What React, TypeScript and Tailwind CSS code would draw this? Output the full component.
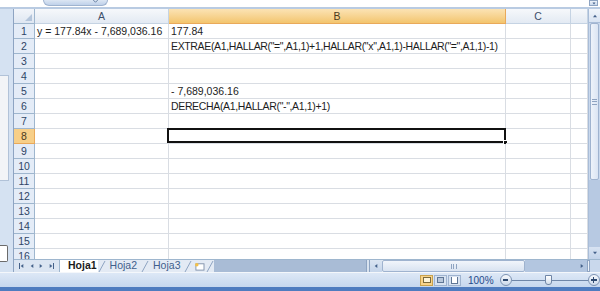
import React from 'react';

const FONT = { fontFamily: '"Liberation Sans", Arial, sans-serif' };

const cols = [
    { key: 'A', w: 'w-[134px]' },
    { key: 'B', w: 'w-[337px]' },
    { key: 'C', w: 'w-[65px]' },
    { key: 'D', w: 'w-[17px]' },
];

const cells: Record<string, { text: string; formula?: boolean }> = {
    'A1': { text: 'y = 177.84x - 7,689,036.16' },
    'B1': { text: '177.84' },
    'B2': { text: 'EXTRAE(A1,HALLAR("=",A1,1)+1,HALLAR("x",A1,1)-HALLAR("=",A1,1)-1)', formula: true },
    'B5': { text: '- 7,689,036.16' },
    'B6': { text: 'DERECHA(A1,HALLAR("-",A1,1)+1)', formula: true },
};

const rows = Array.from({ length: 16 }, (_, i) => i + 1);

function Arrow({ dir, className = '' }: { dir: 'up' | 'down' | 'left' | 'right'; className?: string }) {
    const pts = {
        up: '1,5 4,1 7,5',
        down: '1,1 4,5 7,1',
        left: '5,1 1,4 5,7',
        right: '1,1 5,4 1,7',
    }[dir];
    const vb = dir === 'up' || dir === 'down' ? '0 0 8 6' : '0 0 6 8';
    return (
        <svg viewBox={vb} className={className}>
            <polygon points={pts} fill="#44618a" />
        </svg>
    );
}

function Slash() {
    return (
        <svg viewBox="0 0 8 13" className="w-[8px] h-[13px] shrink-0">
            <line x1="1" y1="12" x2="7" y2="1" stroke="#8ea4c2" strokeWidth="1" />
        </svg>
    );
}

function Grid() {
    return (
        <div className="flex-1 flex flex-col overflow-hidden bg-white">
            {/* column headers */}
            <div className="flex h-[15px] shrink-0">
                <div className="w-[21px] shrink-0 bg-gradient-to-b from-[#f2f5fa] to-[#dfe7f2] border-r border-b border-[#9eb6ce] relative">
                    <svg viewBox="0 0 8 8" className="absolute right-[2px] bottom-[2px] w-[7px] h-[7px]">
                        <polygon points="8,0 8,8 0,8" fill="#b4c5db" />
                    </svg>
                </div>
                {cols.map(c => (
                    <div
                        key={c.key}
                        className={`${c.w} shrink-0 flex items-center justify-center pt-[1px] text-[10.5px] border-r border-b ${c.key === 'B' ? 'bg-gradient-to-b from-[#fbe3b4] to-[#f3c56d] border-[#e9a95a] text-[#4a3a1c]' : 'bg-gradient-to-b from-[#f6f8fb] to-[#e3eaf3] border-[#c5d3e3] text-[#3c4f6a]'}`}
                    >
                        {c.key === 'D' ? '' : c.key}
                    </div>
                ))}
            </div>
            {rows.map(r => (
                <div key={r} className="flex h-[15px] shrink-0">
                    <div className={`w-[21px] shrink-0 flex items-center justify-center pt-[2px] text-[10.5px] border-r border-b ${r === 8 ? 'bg-[#f7cf88] border-[#e9a95a] text-[#4a3a1c]' : 'bg-[#e4ecf7] border-[#9eb6ce] text-[#2e4566]'}`}>
                        {r}
                    </div>
                    {cols.map(c => {
                        const cell = cells[`${c.key}${r}`];
                        const selected = c.key === 'B' && r === 8;
                        return (
                            <div key={c.key} className={`${c.w} shrink-0 relative border-r border-b border-[#d9dde3] flex items-center pt-[2px] pl-[2px] whitespace-nowrap`}>
                                {cell && (
                                    <span className={`text-[#1d1d1d] ${cell.formula ? 'text-[10.5px] tracking-[-0.35px]' : 'text-[10.5px]'}`}>{cell.text}</span>
                                )}
                                {selected && (
                                    <div className="absolute -left-[2px] -top-[1px] w-[calc(100%+3px)] h-[calc(100%+1px)] border-2 border-[#111]">
                                        <div className="absolute -right-[4px] -bottom-[4px] w-[5px] h-[5px] bg-[#111] border border-white" />
                                    </div>
                                )}
                            </div>
                        );
                    })}
                </div>
            ))}
        </div>
    );
}

function VScroll() {
    return (
        <div className="w-[12px] shrink-0 flex flex-col bg-[#c9d8ec] border-l border-[#a9bdd8]">
            <div className="h-[14px] shrink-0 flex items-center justify-center bg-gradient-to-b from-[#f1f5fb] to-[#d8e3f2] border-b border-[#a9bdd8]">
                <Arrow dir="up" className="w-[6px] h-[4px]" />
            </div>
            <div className="h-[157px] shrink-0 mx-[1px] bg-gradient-to-r from-[#eef3fa] to-[#dbe5f3] border border-[#9fb3cf] rounded-[2px] flex items-center justify-center">
                <div className="w-[5px] h-[6px] border-y border-[#8ea3c1] flex flex-col justify-center">
                    <div className="h-px bg-[#8ea3c1]" />
                </div>
            </div>
            <div className="flex-1 bg-[#b7c9e2]" />
            <div className="h-[12px] shrink-0 flex items-center justify-center bg-gradient-to-b from-[#d8e3f2] to-[#c2d3ea]">
                <Arrow dir="down" className="w-[6px] h-[4px]" />
            </div>
        </div>
    );
}

function TabBar() {
    return (
        <div className="h-[13px] shrink-0 flex bg-[#e8eef6] border-t border-[#9eb6ce] text-[10.5px]">
            <div className="w-[46px] shrink-0 flex items-center justify-around px-[2px] bg-[#dbe5f2] border-r border-[#9eb6ce]">
                <div className="flex items-center"><div className="w-px h-[6px] bg-[#44618a]" /><Arrow dir="left" className="w-[4px] h-[6px]" /></div>
                <Arrow dir="left" className="w-[4px] h-[6px]" />
                <Arrow dir="right" className="w-[4px] h-[6px]" />
                <div className="flex items-center"><Arrow dir="right" className="w-[4px] h-[6px]" /><div className="w-px h-[6px] bg-[#44618a]" /></div>
            </div>
            <div className="flex items-center pl-[7px] bg-white">
                <span className="font-bold text-[#1b1b1b] px-[1px]">Hoja1</span>
            </div>
            <div className="flex items-center bg-[#e3eaf4]">
                <Slash />
                <span className="text-[#3f5f8c] px-[4px]">Hoja2</span>
                <Slash />
                <span className="text-[#3f5f8c] px-[4px]">Hoja3</span>
                <Slash />
                <div className="w-[14px] flex items-center justify-center">
                    <svg viewBox="0 0 12 10" className="w-[11px] h-[9px]">
                        <rect x="2" y="2" width="9" height="7" fill="#fff" stroke="#7d8fa8" strokeWidth="1" />
                        <circle cx="3" cy="3" r="2" fill="#f3c14a" />
                    </svg>
                </div>
                <Slash />
            </div>
            <div className="w-[152px] shrink-0 bg-[#a9bcd6]" />
            <div className="w-[4px] shrink-0 bg-[#d8e2ef] border-x border-[#8ea4c2]" />
            <div className="w-[12px] shrink-0 flex items-center justify-center bg-gradient-to-b from-[#dbe5f2] to-[#c5d5ea]">
                <Arrow dir="left" className="w-[4px] h-[6px]" />
            </div>
            <div className="w-[143px] shrink-0 bg-gradient-to-b from-[#f1f5fb] to-[#d9e3f1] border border-[#9fb3cf] rounded-[2px] flex items-center justify-center">
                <div className="w-[6px] h-[5px] border-x border-[#8ea3c1] flex justify-center"><div className="w-px bg-[#8ea3c1]" /></div>
            </div>
            <div className="flex-1 bg-[#b3c6e0]" />
            <div className="w-[10px] shrink-0 flex items-center justify-center bg-[#b3c6e0]">
                <Arrow dir="right" className="w-[4px] h-[6px]" />
            </div>
            <div className="w-[3px] shrink-0 bg-[#eef3fa] border border-[#8ea4c2]" />
            <div className="w-[10px] shrink-0 bg-[#c9d8ec]" />
        </div>
    );
}

function StatusBar() {
    return (
        <div className="h-[15px] shrink-0 flex items-center bg-gradient-to-b from-[#dde8f6] to-[#c6d7ee] border-t border-[#f4f7fb]">
            <div className="w-[420px] shrink-0" />
            <div className="flex items-center gap-[1px]">
                <div className="w-[13px] h-[11px] bg-[#f8d38a] border border-[#c9a24d] flex items-center justify-center">
                    <div className="w-[8px] h-[6px] border border-[#7b6a3c] bg-[#fff5d8]" />
                </div>
                <div className="w-[13px] h-[11px] border border-[#9fb3cf] bg-[#d8e3f1] flex items-center justify-center">
                    <div className="w-[7px] h-[6px] border border-[#5f7696] bg-[#b8c7db]" />
                </div>
                <div className="w-[13px] h-[11px] border border-[#9fb3cf] bg-[#d8e3f1] flex items-center justify-center">
                    <div className="w-[7px] h-[7px] border border-[#5f7696] border-t-0 bg-white" />
                </div>
            </div>
            <span className="ml-[7px] text-[10px] text-[#1f4a8a]">100%</span>
            <div className="ml-[6px] w-[12px] h-[12px] rounded-full border border-[#7d93b3] bg-gradient-to-b from-[#f7f9fc] to-[#cddaeb] flex items-center justify-center">
                <div className="w-[5px] h-[1.5px] bg-[#2f4a70]" />
            </div>
            <div className="relative w-[76px] h-[12px] flex items-center">
                <div className="w-full h-px bg-[#6f86a8]" />
                <div className="absolute left-[37px] top-[3px] w-px h-[6px] bg-[#6f86a8]" />
                <div className="absolute left-[33px] top-[1px] w-[7px] h-[10px] rounded-b-[3px] border border-[#7086a6] bg-gradient-to-b from-[#ffffff] to-[#d3deec]" />
            </div>
            <div className="w-[12px] h-[12px] rounded-full border border-[#7d93b3] bg-gradient-to-b from-[#f7f9fc] to-[#cddaeb] flex items-center justify-center relative">
                <div className="w-[6px] h-[1.5px] bg-[#2f4a70]" />
                <div className="absolute w-[1.5px] h-[6px] bg-[#2f4a70]" />
            </div>
        </div>
    );
}

export default function App() {
    return (
        <div className="w-[600px] h-[291px] flex flex-col overflow-hidden bg-[#d5e2f2]" style={FONT}>
            {/* formula bar remnant */}
            <div className="h-[9px] shrink-0 flex bg-white border-b-2 border-[#b9cbe2]">
                <div className="w-[43px] shrink-0" />
                <div className="w-[65px] h-[6px] shrink-0 rounded-b-[8px] bg-gradient-to-b from-[#dce6f3] to-[#bfd1ea] border-x border-b border-[#9fb3cf] flex justify-end pr-[9px] items-start">
                    <svg viewBox="0 0 6 4" className="w-[5px] h-[3px]"><polyline points="0,0 3,3 6,0" fill="none" stroke="#44618a" /></svg>
                </div>
                <div className="flex-1" />
                <div className="w-[9px] h-[6px] mr-[2px] shrink-0 bg-gradient-to-b from-[#eef3fa] to-[#c9d8ec] border border-[#8ea4c2] flex items-center justify-center">
                    <Arrow dir="down" className="w-[4px] h-[3px]" />
                </div>
            </div>
            <div className="flex h-[263px] shrink-0">
                {/* side pane */}
                <div className="w-[14px] shrink-0 bg-[#d5e2f2] border-r border-[#8ea4c2] flex flex-col">
                    <div className="h-[66px] shrink-0" />
                    <div className="h-[106px] w-[9px] shrink-0 bg-[#f2f4f7] border border-[#b1c2d8] border-l-0" />
                    <div className="flex-1" />
                    <div className="h-[17px] w-[8px] shrink-0 bg-white border border-[#6b6b6b] border-l-0 rounded-r-[2px]" />
                    <div className="h-[10px] shrink-0" />
                </div>
                <div className="flex-1 flex flex-col">
                    <div className="flex h-[250px] shrink-0">
                        <Grid />
                        <VScroll />
                    </div>
                    <TabBar />
                </div>
            </div>
            <StatusBar />
            <div className="h-[4px] shrink-0 bg-[#4f7cbf]" />
        </div>
    );
}
